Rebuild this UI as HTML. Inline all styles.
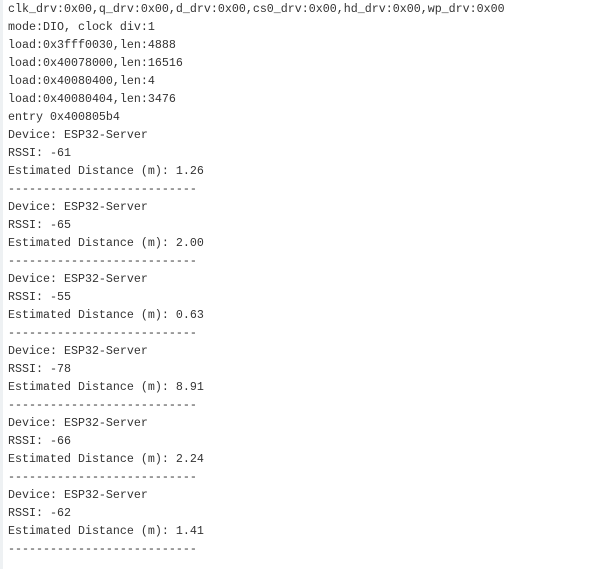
<!DOCTYPE html>
<html><head><meta charset="utf-8"><style>
html,body{margin:0;padding:0;background:#fff;width:605px;height:569px;overflow:hidden}
body{border-left:3px solid #eef1f3;box-sizing:border-box}
pre{margin:0;padding-left:5px;font-family:"Liberation Mono",monospace;font-size:11.67px;line-height:18px;color:#333;position:relative;top:0}
</style></head><body><pre>clk_drv:0x00,q_drv:0x00,d_drv:0x00,cs0_drv:0x00,hd_drv:0x00,wp_drv:0x00
mode:DIO, clock div:1
load:0x3fff0030,len:4888
load:0x40078000,len:16516
load:0x40080400,len:4
load:0x40080404,len:3476
entry 0x400805b4
Device: ESP32-Server
RSSI: -61
Estimated Distance (m): 1.26
---------------------------
Device: ESP32-Server
RSSI: -65
Estimated Distance (m): 2.00
---------------------------
Device: ESP32-Server
RSSI: -55
Estimated Distance (m): 0.63
---------------------------
Device: ESP32-Server
RSSI: -78
Estimated Distance (m): 8.91
---------------------------
Device: ESP32-Server
RSSI: -66
Estimated Distance (m): 2.24
---------------------------
Device: ESP32-Server
RSSI: -62
Estimated Distance (m): 1.41
---------------------------</pre></body></html>
